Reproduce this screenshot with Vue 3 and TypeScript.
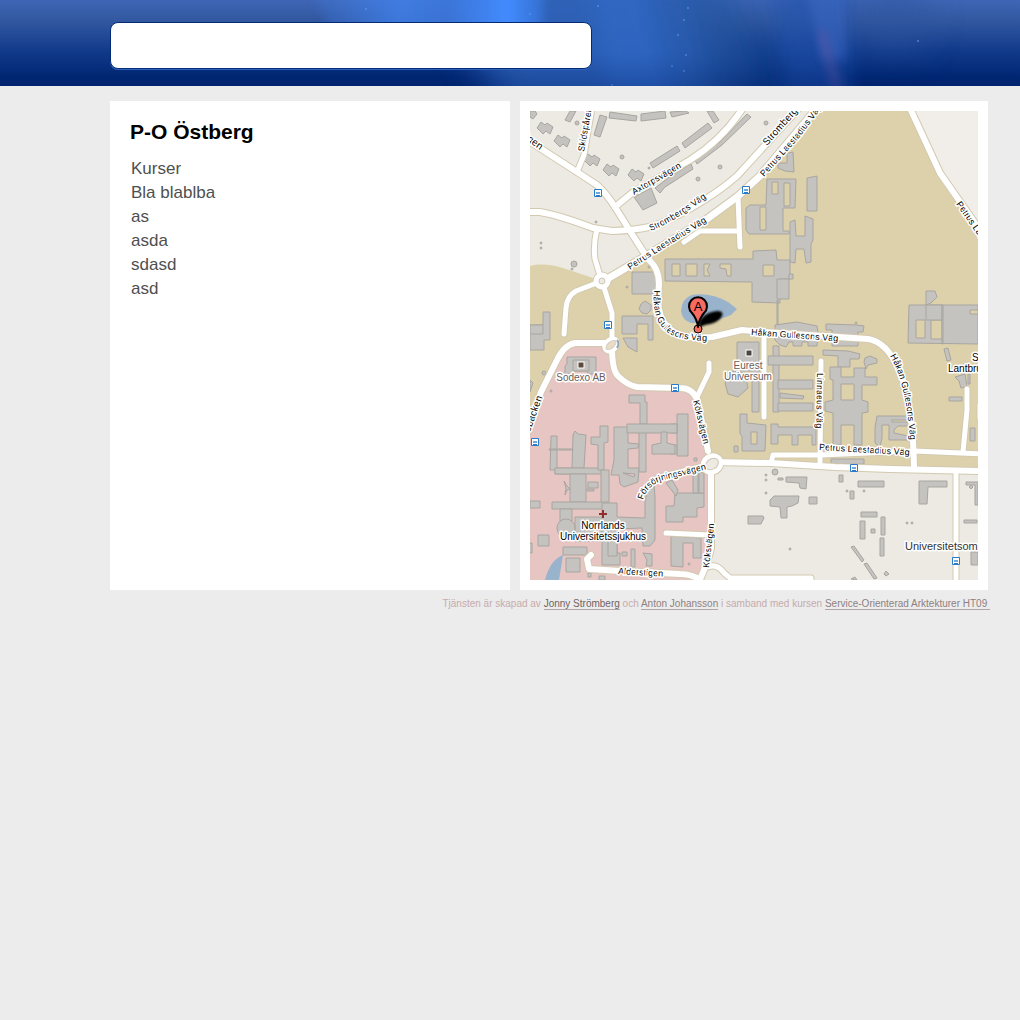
<script setup lang="ts">
import { ref } from 'vue'

interface Road { d: string; w: number }
interface Label { id: string; d: string; text: string; size: number }
interface Place { x: number; y: number; text: string; size: number; tone: string; anchor: 'start' | 'middle' }

const query = ref('')
const courses: string[] = ['Kurser', 'Bla blablba', 'as', 'asda', 'sdasd', 'asd']

const rect = (x: number, y: number, w: number, h: number): string => `M${x},${y}h${w}v${h}h${-w}z`
const poly = (points: string): string => `M${points}z`
const house = (x: number, y: number): string =>
  `M${x - 8},${y}l4,-6 4,3 2,-2 6,4 -3,7 -4,-3 -3,3 -3,-3z`

const roads: Road[] = [
  { d: 'M526,139L577,172L597,185Q606,193 615,207L630,231L648,259Q659,268 659,284L658,300Q659,337 698,338L712,337L742,330L764,332L868,339Q887,342 899,370Q913,402 914,467', w: 6 },
  { d: 'M577,172L584,155L592,108', w: 5 },
  { d: 'M615,207L632,193L690,160Q722,140 743,108', w: 6 },
  { d: 'M526,212H540Q558,215 593,228L612,231Q645,230 662,223Q707,202 737,176L800,107', w: 6 },
  { d: 'M602,282L636,262L707,219L737,197L760,176L819,106', w: 7 },
  { d: 'M597,229Q593,245 595,259L601,279', w: 5 },
  { d: 'M602,281L576,291Q567,296 566,308L564,334', w: 5 },
  { d: 'M602,281L612,313V342', w: 5 },
  { d: 'M611,343H575Q564,345 557,360L541,392L526,436', w: 6 },
  { d: 'M612,347Q612,370 618,376Q627,385 637,387L680,388Q692,388 697,399L708,451', w: 6 },
  { d: 'M709,363V372L697,397', w: 5 },
  { d: 'M711,464V548Q708,562 698,584', w: 6 },
  { d: 'M708,567Q717,563 724,573L730,578H811V584', w: 5 },
  { d: 'M591,555L587,559L589,569L620,571L680,574Q692,574 700,580', w: 6 },
  { d: 'M666,533L709,535', w: 5 },
  { d: 'M712,462L770,463L835,467L890,469L982,471', w: 6 },
  { d: 'M771,463L773,455H820L914,451L982,454', w: 5 },
  { d: 'M821,361L820,463', w: 5 },
  { d: 'M764,334L764,417', w: 5 },
  { d: 'M738,198L740,247', w: 5 },
  { d: 'M738,231H700L684,242', w: 5 },
  { d: 'M909,106L940,173L984,236', w: 6 },
  { d: 'M967,389V410L963,452', w: 5 },
  { d: 'M980,405V418', w: 5 },
  { d: 'M956,471V584', w: 5 },
  { d: 'M641,497Q646,484 660,477L708,465', w: 5 },
]

const buildings: string[] = [
  poly('530,111 535,111 537,114 533,119 530,117'),
  house(545, 128), house(562, 141), house(592, 160), house(611, 170), house(636, 175),
  poly('565,120 570,111 576,111 570,122'),
  poly('600,115 607,117 600,137 594,135'),
  poly('610,112 637,116 636,121 609,118'),
  poly('641,114 665,111 666,118 641,121'),
  poly('670,112 686,111 689,113 672,117'),
  poly('650,163 677,146 680,151 653,168'),
  poly('682,143 708,123 712,128 685,148'),
  poly('707,111 713,111 719,120 714,123'),
  poly('695,160 720,142 747,114 751,117 722,145 697,164'),
  poly('655,188 672,175 691,164 693,169 676,180 665,187 660,193'),
  poly('634,197 651,188 657,203 643,210'),
  poly('787,153 793,152 794,172 785,171 778,168 778,163 787,163'),
  poly('767,179 796,179 795,208 783,208 783,231 789,231 789,234 749,234 746,230 746,208 750,205 766,205') + rect(772, 182, 6, 12) + rect(784, 183, 6, 23) + rect(760, 207, 6, 23),
  poly('807,178 817,176 817,211 807,211'),
  poly('790,222 795,220 796,236 805,236 805,216 813,219 813,240 811,244 811,262 806,263 804,249 796,249 795,263 790,262'),
  poly('665,259 753,259 753,251 776,250 777,260 790,260 790,279 780,279 780,303 752,302 752,282 665,281') + rect(672, 264, 8, 12) + rect(686, 264, 11, 12) + poly('704,264 710,264 707,270 710,276 704,276') + poly('720,264 731,264 731,276 727,276 726,269 720,268') + rect(763, 265, 11, 11),
  rect(777, 279, 12, 20), rect(789, 274, 4, 5), rect(632, 272, 25, 22), rect(777, 300, 1, 24),
  poly('543,312 550,312 550,340 544,340 544,350 530,350 530,325 543,325'), rect(530, 325, 13, 9),
  poly('641,304 645,301 651,305 651,310 647,314 642,313 639,309'),
  poly('622,316 653,316 653,340 648,340 648,324 637,324 637,334 622,334'),
  poly('623,338 637,338 637,352 628,347'),
  poly('567,357 596,357 596,374 588,374 587,371 575,371 574,374 565,374 565,366 567,364'), rect(573, 360, 16, 11),
  poly('530,380 533,383 530,392'),
  poly('737,342 759,342 759,412 752,412 752,371 737,371'),
  poly('725,383 732,371 745,373 748,388 738,397 728,394'),
  poly('775,325 797,322 817,326 818,332 817,346 808,346 808,342 802,342 802,346 793,346 793,342 789,342 786,347 780,345 775,340'),
  rect(773, 346, 6, 66), rect(768, 356, 45, 9), rect(778, 380, 35, 9), poly('780,393 804,396 803,399 780,398'), rect(778, 403, 35, 8),
  poly('740,414 747,414 747,423 766,425 765,451 742,451 742,436 740,434') + rect(751, 432, 6, 12),
  rect(734, 446, 4, 6),
  poly('771,424 778,424 778,427 816,427 816,445 812,445 812,435 798,435 798,445 792,445 792,435 778,435 778,444 771,444'),
  poly('823,350 848,351 860,354 859,359 850,359 850,367 838,367 838,356 823,355'),
  poly('826,324 857,325 864,326 863,332 858,332 858,346 832,346 832,330 826,330'),
  poly('865,358 870,356 877,359 877,363 868,365 866,369 864,362'),
  poly('830,367 841,367 841,377 854,377 854,368 865,368 865,377 877,377 877,385 862,385 862,400 868,402 868,412 862,413 862,445 854,445 854,425 841,425 841,445 833,445 833,413 825,411 825,402 833,400 833,380 830,379') + rect(841, 384, 13, 16),
  poly('875,427 877,416 908,416 908,420 892,420 892,422 908,422 908,426 898,426 894,430 894,433 908,436 908,440 889,440 889,425 882,425 882,438 880,447 875,443'),
  poly('909,305 978,305 978,344 908,343') + rect(916, 320, 9, 18) + rect(931, 320, 11, 19) + rect(970, 310, 9, 4),
  poly('926,305 926,291 935,291 937,297 931,303'), rect(926, 305, 16, 15), rect(942, 305, 1, 39),
  poly('944,349 948,348 951,360 947,361'),
  poly('955,377 965,374 967,387 961,388 959,381'), rect(968, 374, 2, 10), rect(949, 397, 13, 4),
  rect(970, 428, 5, 13), rect(831, 459, 33, 5), rect(839, 475, 4, 7), rect(858, 481, 26, 6), rect(850, 491, 4, 8),
  poly('919,481 947,481 947,487 928,487 927,504 919,504'),
  rect(861, 512, 16, 5), rect(860, 521, 5, 18), rect(881, 517, 4, 18), rect(880, 538, 4, 18), rect(871, 529, 4, 4),
  poly('851,547 854,546 864,560 862,562'), poly('864,564 867,563 877,578 874,579'), poly('851,579 855,577 857,580'), poly('884,574 886,571 889,574 886,576'),
  poly('966,482 978,482 978,505 975,505 975,485 966,485'), poly('969,487 971,485 973,487 971,489'), rect(964, 520, 13, 3), rect(971, 552, 7, 13),
  poly('786,477 807,477 806,489 800,488 799,483 786,482'),
  poly('770,500 774,496 799,496 798,503 792,506 787,507 787,518 781,518 780,507 770,506'),
  rect(809, 497, 8, 7), poly('748,516 763,516 764,518 761,524 748,524'), rect(778, 478, 5, 2),
  poly('666,506 674,506 675,493 704,493 704,507 697,508 697,517 683,517 683,522 666,522'),
  rect(693, 472, 11, 21), rect(698, 472, 1, 21), rect(677, 414, 11, 42), rect(671, 424, 6, 9), rect(670, 445, 7, 9), rect(694, 458, 3, 3),
  poly('671,536 701,538 701,558 693,558 693,543 683,543 683,567 671,566'),
  poly('666,483 672,480 678,490 676,496'),
  poly('551,436 557,436 557,468 574,468 574,474 555,474 555,470 550,470'),
  poly('573,435 575,431 578,434 586,435 584,468 572,468'), rect(549, 449, 24, 1),
  rect(555, 468, 47, 6),
  poly('600,426 608,426 608,442 604,443 604,470 598,470 598,445 591,444 591,437 600,437'),
  poly('614,427 628,427 628,443 639,444 638,448 628,449 628,468 639,468 638,482 624,487 620,484 619,475 611,475 614,460') + poly('623,473 635,474 634,477'),
  poly('629,395 645,395 645,402 647,402 647,424 640,424 640,403 629,403'),
  rect(639, 432, 7, 40), rect(627, 424, 50, 9),
  poly('652,445 661,443 661,432 667,432 667,443 675,445 675,454 652,454'),
  rect(570, 474, 16, 28), rect(588, 482, 10, 6), rect(587, 489, 7, 2), poly('564,481 567,486 570,489 567,490 565,495 566,488'),
  rect(601, 470, 8, 34), rect(552, 502, 56, 7), rect(560, 509, 12, 12), rect(575, 517, 27, 24),
  poly('602,503 617,503 617,517 645,518 645,502 648,485 654,485 655,497 655,540 650,546 643,546 642,528 617,529 617,553 620,553 620,565 602,565'),
  rect(608, 530, 9, 26),
  'M557,528a9,9 0 1 0 18,0a9,9 0 1 0 -18,0z',
  rect(563, 547, 24, 8), rect(566, 558, 14, 14), rect(538, 535, 11, 11), rect(530, 501, 10, 7),
  rect(631, 549, 4, 18), poly('643,553 652,554 652,566 646,566 647,560'), rect(622, 552, 5, 4), rect(588, 573, 3, 4), rect(599, 576, 6, 4), rect(529, 543, 3, 10),
]

const dots: [number, number, number][] = [
  [577, 123, 2], [622, 157, 2], [649, 168, 1], [766, 123, 2], [720, 167, 2], [698, 179, 2], [596, 222, 1],
  [541, 243, 1], [541, 248, 1], [574, 264, 3], [627, 287, 1], [649, 267, 1], [544, 373, 2], [551, 391, 1],
  [856, 323, 1], [847, 491, 1], [864, 491, 1], [907, 523, 1], [912, 523, 1], [775, 472, 3], [766, 475, 1],
  [766, 480, 1], [766, 493, 1], [790, 549, 1], [689, 564, 1], [572, 269, 1],
]

const stops: [number, number][] = [[598, 193], [746, 190], [608, 325], [675, 388], [535, 442], [854, 468], [956, 561]]

const labels: Label[] = [
  { id: 'l1', d: 'M518,134L560,165', text: 'vägen', size: 10 },
  { id: 'l2', d: 'M584,152L594,96', text: 'Skidspåret', size: 9 },
  { id: 'l3', d: 'M634,195L696,159', text: 'Axtorpsvägen', size: 9 },
  { id: 'l4', d: 'M651,231Q680,219 722,186', text: 'Strombergs Väg', size: 9 },
  { id: 'l5', d: 'M767,146L824,82', text: 'Strombergs', size: 10 },
  { id: 'l6', d: 'M630,270L664,248L726,210', text: 'Petrus Laestadius Väg', size: 9 },
  { id: 'l7', d: 'M764,177L800,137L842,80', text: 'Petrus Laestadius Väg', size: 9 },
  { id: 'l8', d: 'M956,204L1010,282', text: 'Petrus Laestadius', size: 9 },
  { id: 'l9', d: 'M654,290Q651,322 670,334Q684,342 722,341', text: 'Håkan Gullesons Väg', size: 9 },
  { id: 'l10', d: 'M751,335L860,343', text: 'Håkan Gullesons Väg', size: 9 },
  { id: 'l11', d: 'M890,356Q909,388 911,460', text: 'Håkan Gullesons Väg', size: 9 },
  { id: 'l12', d: 'M817,373L816,445', text: 'Linnaeus Väg', size: 9 },
  { id: 'l13', d: 'M819,450L940,457', text: 'Petrus Laestadius Väg', size: 9 },
  { id: 'l14', d: 'M693,401L708,462', text: 'Köksvägen', size: 9 },
  { id: 'l15', d: 'M643,500Q647,485 664,480L720,466', text: 'Försörjningsvägen', size: 9 },
  { id: 'l16', d: 'M709,568L716,508', text: 'Köksvägen', size: 9 },
  { id: 'l17', d: 'M618,574L690,578', text: 'Alderstigen', size: 9 },
  { id: 'l18', d: 'M530,432L550,376', text: 'sbacken', size: 10 },
]

const places: Place[] = [
  { x: 581, y: 381, text: 'Sodexo AB', size: 10, tone: 'brown', anchor: 'middle' },
  { x: 748, y: 369, text: 'Eurest', size: 10, tone: 'brown', anchor: 'middle' },
  { x: 748, y: 380, text: 'Universum', size: 10, tone: 'brown', anchor: 'middle' },
  { x: 603, y: 529, text: 'Norrlands', size: 10, tone: 'black', anchor: 'middle' },
  { x: 603, y: 540, text: 'Universitetssjukhus', size: 10, tone: 'black', anchor: 'middle' },
  { x: 972, y: 361, text: 'Sveriges', size: 10, tone: 'black', anchor: 'start' },
  { x: 948, y: 372, text: 'Lantbruks', size: 10, tone: 'black', anchor: 'start' },
  { x: 905, y: 550, text: 'Universitetsområdet', size: 11, tone: 'grey', anchor: 'start' },
]

const stars: [number, number][] = [
  [366, 9], [443, 41], [530, 14], [565, 26], [598, 6], [612, 85], [606, 95], [672, 131], [688, 8], [684, 20],
  [678, 35], [686, 55], [684, 71], [739, 99], [759, 102], [672, 66], [918, 41],
]
</script>

<template>
  <div class="page">
    <header class="banner">
      <svg class="aurora" viewBox="0 0 1020 86" preserveAspectRatio="none" aria-hidden="true">
        <defs>
          <filter id="soft" x="-50%" y="-50%" width="200%" height="200%"><feGaussianBlur stdDeviation="18" /></filter>
          <filter id="haze" x="-50%" y="-50%" width="200%" height="200%"><feGaussianBlur stdDeviation="10" /></filter>
          <filter id="mist" x="-100%" y="-50%" width="300%" height="200%"><feGaussianBlur stdDeviation="5" /></filter>
          <linearGradient id="flare" x1="0" x2="1" y1="0" y2="0">
            <stop offset="0" stop-color="#4286f5" stop-opacity="0" />
            <stop offset="0.4" stop-color="#4286f5" stop-opacity="0.7" />
            <stop offset="0.6" stop-color="#3f7de6" stop-opacity="0.7" />
            <stop offset="0.85" stop-color="#438cff" />
            <stop offset="1" stop-color="#3979e0" stop-opacity="0.6" />
          </linearGradient>
        </defs>
        <path d="M430,-40H700L730,130H510Z" fill="#2d62b8" opacity="0.9" filter="url(#soft)" />
        <path d="M300,-30H545L541,50Q430,60 340,50Z" fill="url(#flare)" filter="url(#mist)" />
        <path d="M592,-20L640,-20L675,110H610Z" fill="#3470d2" opacity="0.4" filter="url(#haze)" />
        <path d="M670,-20H730L790,110H710Z" fill="#24529d" opacity="0.6" filter="url(#soft)" />
        <path d="M770,-20L850,-20L850,110H785Z" fill="#2053ad" opacity="0.6" filter="url(#haze)" />
        <path d="M805,-20H844L846,60H822Z" fill="#4670cb" opacity="0.4" filter="url(#mist)" />
        <path d="M818,30L826,30L842,90H832Z" fill="#6455a0" opacity="0.5" filter="url(#mist)" />
        <path d="M860,-20H930L920,50H865Z" fill="#2e549f" opacity="0.5" filter="url(#soft)" />
        <circle v-for="([x, y], i) in stars" :key="i" :cx="x" :cy="y" r="1" fill="#5e98f2" opacity="0.7" />
      </svg>
      <input v-model="query" class="search" type="text" aria-label="Sök" />
    </header>

    <main class="content">
      <section class="panel person">
        <h1>P-O Östberg</h1>
        <ul>
          <li v-for="course in courses" :key="course">{{ course }}</li>
        </ul>
      </section>

      <section class="panel map">
        <svg viewBox="530 111 448 469" role="img" aria-label="Karta">
          <rect x="530" y="111" width="448" height="469" fill="#eceae2" />
          <path d="M908,111H978V232L940,173Z" fill="#f1eee9" />
          <path d="M530,266Q545,262 566,269L602,281L640,260L737,197L819,108H909L940,173L984,236V471L712,462L640,480L526,436Z" fill="#ddd1ab" />
          <path d="M526,436L541,392L557,360Q564,345 575,343H611Q612,370 618,376Q627,387 637,387L680,388Q692,388 697,399L711,455V548Q708,562 698,584H526Z" fill="#e6c5c3" />
          <path d="M563,555Q550,560 545,580H559Z" fill="#99b3cc" />
          <path d="M681,311Q682,298 692,295Q710,292 728,302L737,309L731,315Q716,321 705,323H691Q682,320 681,311Z" fill="#99b3cc" />

          <path v-for="(b, i) in buildings" :key="i" :d="b" class="building" />
          <circle v-for="([x, y, r], i) in dots" :key="i" :cx="x" :cy="y" :r="r" class="building" />

          <g class="casing">
            <path v-for="(r, i) in roads" :key="i" :d="r.d" :stroke-width="r.w + 2" />
            <ellipse cx="602" cy="281" rx="6" ry="6" stroke-width="7" />
            <ellipse cx="611" cy="345" rx="7" ry="5" stroke-width="7" transform="rotate(-40 611 345)" />
            <ellipse cx="712" cy="464" rx="9" ry="8" stroke-width="7" transform="rotate(-30 712 464)" />
          </g>
          <g class="surface">
            <path v-for="(r, i) in roads" :key="i" :d="r.d" :stroke-width="r.w" />
            <ellipse cx="602" cy="281" rx="6" ry="6" stroke-width="5" />
            <ellipse cx="611" cy="345" rx="7" ry="5" stroke-width="5" transform="rotate(-40 611 345)" />
            <ellipse cx="712" cy="464" rx="9" ry="8" stroke-width="5" transform="rotate(-30 712 464)" />
          </g>
          <g stroke="#cfc8b8">
            <circle cx="602" cy="281" r="3" fill="#eceae2" />
            <ellipse cx="611" cy="345" rx="6" ry="3" fill="#e8dcc6" transform="rotate(-40 611 345)" />
            <ellipse cx="712" cy="464" rx="7" ry="5" fill="#eceae2" transform="rotate(-35 712 464)" />
          </g>
          <path d="M617,348Q620,343 617,340" fill="none" stroke="#8fa3b5" stroke-width="2" />

          <g v-for="l in labels" :key="l.id">
            <path :id="l.id" :d="l.d" fill="none" />
            <text class="label" :font-size="l.size"><textPath :href="'#' + l.id">{{ l.text }}</textPath></text>
          </g>
          <text
            v-for="p in places" :key="p.text" class="label" :class="p.tone"
            :x="p.x" :y="p.y" :font-size="p.size" :text-anchor="p.anchor"
          >{{ p.text }}</text>

          <g v-for="([x, y], i) in stops" :key="i" :transform="`translate(${x - 4} ${y - 4})`">
            <rect width="8" height="8" rx="1" fill="#2a7cc8" />
            <path d="M1,1H7V7H6V6H2V7H1Z" fill="#fff" />
            <path d="M2,3H6V5H2Z" fill="#6da9de" />
          </g>

          <rect x="578" y="362" width="6" height="6" fill="#5c4a3c" stroke="#fff" />
          <rect x="746" y="350" width="6" height="6" fill="#4a4540" stroke="#fff" />
          <path d="M599,514H607M603,510V518" stroke="#8c2f30" stroke-width="2" />

          <path class="shadow" d="M698,328L700,320Q706,312 717,311Q724,311 722,316Q719,323 705,325Z" />
          <circle cx="698" cy="329" r="4" fill="#f4685c" stroke="#000" />
          <path d="M698,327Q697,319 692,313A9,9 0 1 1 704,313Q699,319 698,327Z" fill="#f96a60" stroke="#000" stroke-width="2" stroke-linejoin="round" />
          <text x="698" y="311" class="pin" text-anchor="middle">A</text>
        </svg>
      </section>
    </main>

    <footer class="credits">
      Tjänsten är skapad av <a class="dark" href="#jonny">Jonny Strömberg</a> och <a href="#anton">Anton Johansson</a>
      i samband med kursen <a href="#kurs">Service-Orienterad Arktekturer HT09&nbsp;</a>
    </footer>
  </div>
</template>

<style>
body {
  background: #ececec;
}
</style>

<style scoped>
.page {
  font-family: "Liberation Sans", Arial, sans-serif;
}
.banner {
  position: relative;
  box-sizing: border-box;
  height: 86px;
  padding: 22px 32px 0 110px;
  background: linear-gradient(#3f66b5 0, #31579f 25%, #123b8b 58%, #002672 90%, #002470 100%);
  overflow: hidden;
}
.aurora {
  position: absolute;
  inset: 0;
  width: 100%;
  height: 100%;
  -webkit-mask-image: linear-gradient(#000 60%, rgba(0, 0, 0, 0.7));
  mask-image: linear-gradient(#000 60%, rgba(0, 0, 0, 0.7));
}
.search {
  position: relative;
  box-sizing: border-box;
  display: block;
  width: 100%;
  max-width: 482px;
  height: 47px;
  padding: 0 12px;
  border: 1px solid #052a75;
  border-radius: 8px;
  background: #fff;
  box-shadow: 0 1px 0 #2e62bd;
  font-family: inherit;
  font-size: 20px;
  outline: none;
}
.content {
  display: grid;
  grid-template-columns: 400fr 468fr;
  gap: 10px;
  padding: 15px 32px 0 110px;
}
.panel {
  background: #fff;
}
.person {
  padding: 18px 20px;
}
.person h1 {
  margin: 0 0 12px;
  color: #000;
  font-size: 21px;
  line-height: 26px;
}
.person ul {
  margin: 0;
  padding: 0 1px;
  list-style: none;
  color: #4f4f4f;
  font-size: 17px;
  line-height: 24px;
}
.map {
  padding: 10px;
}
.map svg {
  display: block;
  width: 100%;
  height: auto;
}
.building {
  fill: #c5c3bf;
  fill-rule: evenodd;
  stroke: #a8a5a1;
}
.casing,
.surface {
  fill: none;
  stroke: #d2c9b0;
  stroke-linecap: round;
  stroke-linejoin: round;
}
.surface {
  stroke: #fff;
}
.label {
  fill: #000;
  stroke: #fff;
  stroke-width: 3px;
  stroke-linejoin: round;
  paint-order: stroke;
}
.label.brown {
  fill: #6a5c58;
}
.label.grey {
  fill: #333;
}
.shadow {
  fill: #000;
  filter: blur(1px);
}
.pin {
  font-size: 13px;
}
.credits {
  padding: 8px 30px 0 110px;
  color: #c6abab;
  font-size: 10px;
  line-height: 12px;
  text-align: right;
}
.credits a {
  border-bottom: 1px solid #b3a5a5;
  color: #8f8080;
  text-decoration: none;
}
.credits .dark {
  color: #6f6262;
}
</style>
